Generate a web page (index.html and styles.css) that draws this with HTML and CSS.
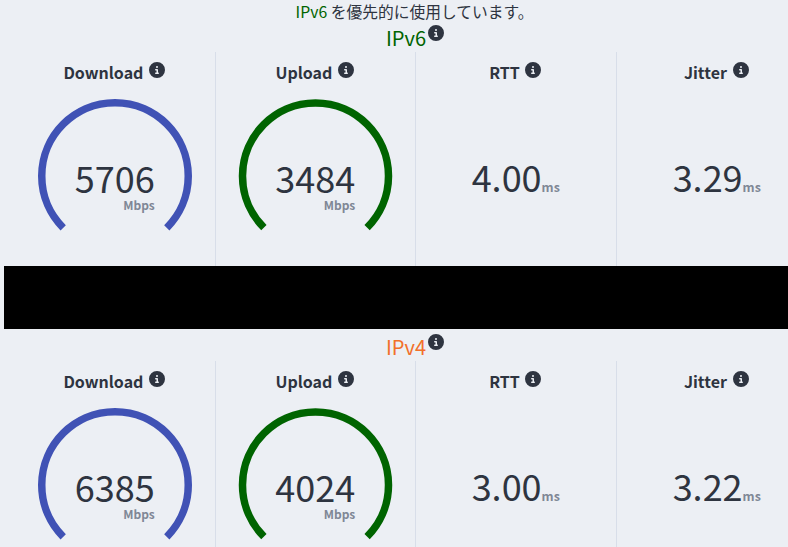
FILE: index.html
```html
<!DOCTYPE html>
<html lang="ja">
<head>
    <meta charset="UTF-8">
    <meta name="viewport" content="width=device-width, initial-scale=1.0">
    <title>IPv6 / IPv4 Speed</title>
    <link rel="stylesheet" href="styles.css">
</head>
<body>
    <svg class="defs" width="0" height="0">
        <symbol id="info" viewBox="0 0 512 512">
            <path d="M256 512A256 256 0 1 0 256 0a256 256 0 1 0 0 512zM216 336h24V272H216c-13.3 0-24-10.7-24-24s10.7-24 24-24h48c13.3 0 24 10.7 24 24v88h8c13.3 0 24 10.7 24 24s-10.7 24-24 24H216c-13.3 0-24-10.7-24-24s10.7-24 24-24zm40-208a32 32 0 1 1 0 64 32 32 0 1 1 0-64z"/>
        </symbol>
    </svg>

    <!-- IPv6 -->
    <section class="result">
        <p class="note"><span class="v6">IPv6</span> を優先的に使用しています。</p>
        <h2 class="proto v6">IPv6<svg class="info"><use href="#info"/></svg></h2>
        <div class="stats">
            <div class="stat">
                <h3>Download <svg class="info"><use href="#info"/></svg></h3>
                <div class="gauge">
                    <svg viewBox="0 0 154 154"><path class="arc down" d="M25.2 128.8A73.25 73.25 0 1 1 128.8 128.8"/></svg>
                    <div class="reading"><span class="num">5706</span><span class="unit">Mbps</span></div>
                </div>
            </div>
            <div class="stat">
                <h3>Upload <svg class="info"><use href="#info"/></svg></h3>
                <div class="gauge">
                    <svg viewBox="0 0 154 154"><path class="arc up" d="M25.9 128.6A73 73 0 1 1 129.1 128.6"/></svg>
                    <div class="reading"><span class="num">3484</span><span class="unit">Mbps</span></div>
                </div>
            </div>
            <div class="stat">
                <h3>RTT <svg class="info"><use href="#info"/></svg></h3>
                <div class="plain"><span class="num">4.00</span><span class="small">ms</span></div>
            </div>
            <div class="stat">
                <h3>Jitter <svg class="info"><use href="#info"/></svg></h3>
                <div class="plain"><span class="num">3.29</span><span class="small">ms</span></div>
            </div>
        </div>
    </section>

    <div class="mask"></div>

    <!-- IPv4 -->
    <section class="result">
        <h2 class="proto proto-v4 v4">IPv4<svg class="info"><use href="#info"/></svg></h2>
        <div class="stats">
            <div class="stat">
                <h3>Download <svg class="info"><use href="#info"/></svg></h3>
                <div class="gauge">
                    <svg viewBox="0 0 154 154"><path class="arc down" d="M25.2 128.8A73.25 73.25 0 1 1 128.8 128.8"/></svg>
                    <div class="reading"><span class="num">6385</span><span class="unit">Mbps</span></div>
                </div>
            </div>
            <div class="stat">
                <h3>Upload <svg class="info"><use href="#info"/></svg></h3>
                <div class="gauge">
                    <svg viewBox="0 0 154 154"><path class="arc up" d="M25.9 128.6A73 73 0 1 1 129.1 128.6"/></svg>
                    <div class="reading"><span class="num">4024</span><span class="unit">Mbps</span></div>
                </div>
            </div>
            <div class="stat">
                <h3>RTT <svg class="info"><use href="#info"/></svg></h3>
                <div class="plain"><span class="num">3.00</span><span class="small">ms</span></div>
            </div>
            <div class="stat">
                <h3>Jitter <svg class="info"><use href="#info"/></svg></h3>
                <div class="plain"><span class="num">3.22</span><span class="small">ms</span></div>
            </div>
        </div>
    </section>
</body>
</html>
```

FILE: styles.css
```css
html, body {
    margin: 0;
    height: 547px;
    overflow: hidden;
}
body {
    background-color: #eceff4;
    color: #2e3440;
    font-family: "Noto Sans CJK JP", "Noto Sans", sans-serif;
}
.defs {
    display: block;
    height: 0;
}
.result {
    width: 802px;
    padding-left: 15px;
}
.note {
    margin: 0;
    padding-right: 3px;
    height: 24px;
    line-height: 23px;
    font-size: 15.75px;
    text-align: center;
}
.v6 {
    color: #006400;
}
.v4 {
    color: #f2702a;
}
.proto {
    margin: 0;
    padding-right: 2px;
    height: 28px;
    line-height: 28px;
    font-size: 20px;
    font-weight: 400;
    text-align: center;
}
.proto-v4 {
    height: 32px;
    line-height: 36px;
}
.proto .info {
    vertical-align: 5px;
    margin-left: 2px;
}
.info {
    width: 16px;
    height: 16px;
    margin-left: 2px;
    fill: #2e3440;
    vertical-align: 1px;
}
.stats {
    display: grid;
    grid-template-columns: repeat(4, 1fr);
    height: 214px;
}
.stat {
    border-right: 1px solid #d8dee9;
    text-align: center;
}
.stat:last-child {
    border-right: none;
}
.stat h3 {
    margin: 0;
    padding: 6px 1px 0 0;
    height: 37px;
    line-height: 28px;
    font-size: 16px;
    font-weight: 700;
}
.gauge {
    display: grid;
    width: 154px;
    height: 154px;
    margin: 4px auto 0;
}
.gauge > * {
    grid-area: 1 / 1;
}
.gauge svg {
    width: 154px;
    height: 154px;
    overflow: visible;
}
.arc {
    fill: none;
    stroke-width: 7.5;
}
.down {
    stroke: #4052b5;
}
.up {
    stroke: #006400;
}
.reading {
    display: flex;
    flex-direction: column;
    align-items: center;
    padding-top: 56px;
}
.num {
    font-size: 36px;
    line-height: 44px;
}
.unit {
    align-self: flex-end;
    margin-right: 37px;
    margin-top: -1px;
    font-size: 12px;
    line-height: 14px;
    font-weight: 700;
    color: #7f8796;
}
.plain {
    padding-top: 59px;
}
.small {
    font-size: 12.5px;
    font-weight: 700;
    color: #7f8796;
}
.mask {
    height: 63px;
    margin-left: 4px;
    background-color: #000;
}
```
